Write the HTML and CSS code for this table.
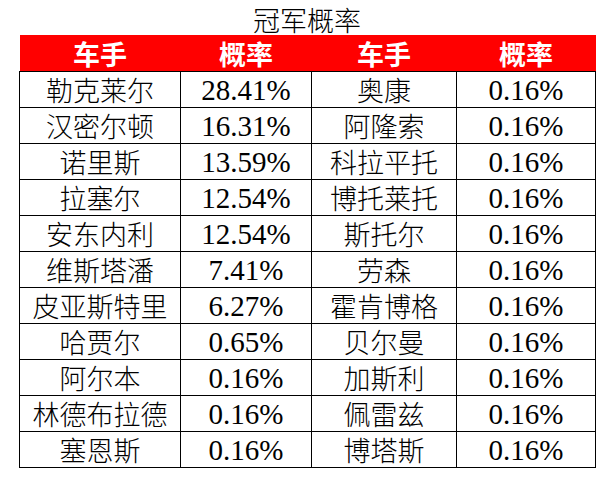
FILE: index.html
```html
<!DOCTYPE html>
<html lang="zh-CN">
<head>
<meta charset="utf-8">
<title>冠军概率</title>
<link rel="stylesheet" href="styles.css">
</head>
<body>
<div class="sheet">
  <div class="title">冠军概率</div>
  <table class="grid">
    <colgroup>
      <col class="c1"><col class="c2"><col class="c3"><col class="c4">
    </colgroup>
    <thead>
      <tr class="head"><th>车手</th><th>概率</th><th>车手</th><th>概率</th></tr>
    </thead>
    <tbody>
      <tr><td>勒克莱尔</td><td class="num">28.41%</td><td>奥康</td><td class="num">0.16%</td></tr>
      <tr><td>汉密尔顿</td><td class="num">16.31%</td><td>阿隆索</td><td class="num">0.16%</td></tr>
      <tr><td>诺里斯</td><td class="num">13.59%</td><td>科拉平托</td><td class="num">0.16%</td></tr>
      <tr><td>拉塞尔</td><td class="num">12.54%</td><td>博托莱托</td><td class="num">0.16%</td></tr>
      <tr><td>安东内利</td><td class="num">12.54%</td><td>斯托尔</td><td class="num">0.16%</td></tr>
      <tr><td>维斯塔潘</td><td class="num">7.41%</td><td>劳森</td><td class="num">0.16%</td></tr>
      <tr><td>皮亚斯特里</td><td class="num">6.27%</td><td>霍肯博格</td><td class="num">0.16%</td></tr>
      <tr><td>哈贾尔</td><td class="num">0.65%</td><td>贝尔曼</td><td class="num">0.16%</td></tr>
      <tr><td>阿尔本</td><td class="num">0.16%</td><td>加斯利</td><td class="num">0.16%</td></tr>
      <tr><td>林德布拉德</td><td class="num">0.16%</td><td>佩雷兹</td><td class="num">0.16%</td></tr>
      <tr><td>塞恩斯</td><td class="num">0.16%</td><td>博塔斯</td><td class="num">0.16%</td></tr>
    </tbody>
  </table>
</div>
</body>
</html>
```

FILE: styles.css
```css
html, body {
  margin: 0;
  padding: 0;
  background: #ffffff;
}
body {
  font-family: "Liberation Serif", "Noto Sans CJK SC", serif;
  color: #000000;
}
.sheet {
  width: 576px;
  margin-left: 19px;
  padding-top: 4px;
}
.title {
  height: 31px;
  line-height: 31px;
  text-align: center;
  font-size: 27px;
  font-family: "Noto Sans CJK SC", sans-serif;
  font-weight: 300;
}
.grid {
  width: 576px;
  border-collapse: collapse;
  table-layout: fixed;
}
.c1 { width: 161px; }
.c2 { width: 131px; }
.c3 { width: 145px; }
.c4 { width: 139px; }
.grid th,
.grid td {
  padding: 0;
  text-align: center;
  vertical-align: middle;
  white-space: nowrap;
}
.head th {
  background: #ff0000;
  color: #ffffff;
  height: 36px;
  line-height: 35px;
  font-size: 27px;
  font-weight: 700;
  font-family: "Noto Sans CJK SC", sans-serif;
  border: 0;
}
.grid td {
  height: 35px;
  line-height: 34px;
  font-size: 27px;
  font-family: "Noto Sans CJK SC", sans-serif;
  font-weight: 300;
  border: 1px solid #000000;
}
.grid td.num {
  font-family: "Liberation Serif", serif;
  font-weight: 400;
  font-size: 29px;
}
```
